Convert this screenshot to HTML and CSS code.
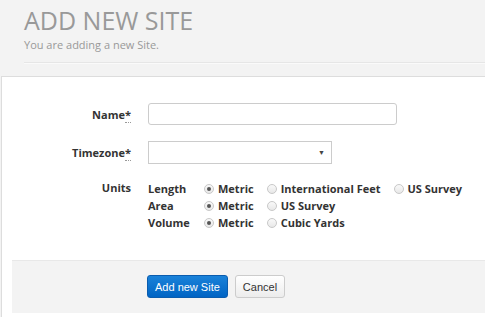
FILE: index.html
```html
<!DOCTYPE html>
<html lang="en">
<head>
  <meta charset="UTF-8">
  <title>Add New Site</title>
  <link rel="stylesheet" href="styles.css">
</head>
<body>
  <div class="page-head">
    <h1>ADD NEW SITE</h1>
    <p>You are adding a new Site.</p>
  </div>
  <div class="panel">
    <form class="site-form">
      <div class="row">
        <label class="lbl" for="name">Name<abbr>*</abbr></label>
        <input type="text" id="name" class="text-input">
      </div>
      <div class="row">
        <label class="lbl" for="tz">Timezone<abbr>*</abbr></label>
        <div class="select"><span class="arrow">&#9660;</span></div>
      </div>
      <div class="row units-row">
        <span class="lbl">Units</span>
        <div class="units">
          <div class="unit-line">
            <span class="unit-name">Length</span>
            <label class="opt"><input type="radio" name="len" checked>Metric</label>
            <label class="opt"><input type="radio" name="len">International Feet</label>
            <label class="opt"><input type="radio" name="len">US Survey</label>
          </div>
          <div class="unit-line">
            <span class="unit-name">Area</span>
            <label class="opt"><input type="radio" name="area" checked>Metric</label>
            <label class="opt"><input type="radio" name="area">US Survey</label>
          </div>
          <div class="unit-line">
            <span class="unit-name">Volume</span>
            <label class="opt"><input type="radio" name="vol" checked>Metric</label>
            <label class="opt"><input type="radio" name="vol">Cubic Yards</label>
          </div>
        </div>
      </div>
      <div class="actions">
        <button type="button" class="btn btn-primary">Add new Site</button>
        <button type="button" class="btn">Cancel</button>
      </div>
    </form>
  </div>
</body>
</html>
```

FILE: styles.css
```css
body { margin: 0; background: #f3f3f3; font-family: "Open Sans", sans-serif; color: #333; overflow: hidden; }
.page-head { margin-left: 24px; padding-top: 6px; height: 56px; border-bottom: 1px solid #e6e6e6; box-shadow: 0 1px 0 #fafafa; }
.page-head h1 { margin: 0; font-size: 25px; font-weight: 400; color: #999; line-height: 28px; }
.page-head p { margin: 4px 0 0; font-size: 11px; color: #999; line-height: 14px; }
.panel { margin: 13px 0 0 1px; background: #fff; border: 1px solid #ddd; border-right: none; border-bottom: none; height: 240px; }
.site-form { padding-top: 26px; }
.row { display: flex; align-items: center; margin-bottom: 16px; }
.lbl { width: 129px; flex-shrink: 0; text-align: right; font-size: 11px; font-weight: 700; color: #333; margin-right: 17px; }
.lbl abbr { text-decoration: none; border-bottom: 1px dotted #999; }
.text-input { width: 249px; height: 22px; box-sizing: border-box; border: 1px solid #ccc; border-radius: 3px; padding: 0 6px; margin: 0; }
.select { width: 184px; height: 23px; box-sizing: border-box; border: 1px solid #ccc; display: flex; align-items: center; justify-content: flex-end; padding-right: 6px; }
.arrow { font-size: 7px; color: #444; }
.units-row { align-items: flex-start; margin-top: 16px; }
.unit-line { display: flex; align-items: center; height: 17px; font-size: 11px; font-weight: 700; color: #333; white-space: nowrap; }
.unit-name { width: 52px; flex-shrink: 0; }
.opt { display: flex; align-items: center; margin-right: 9px; flex-shrink: 0; }
.opt input { appearance: none; width: 10px; height: 10px; margin: 0 4px 0 4px; border: 1px solid #c8c8c8; border-radius: 50%; background: linear-gradient(#f9f9f9, #e8e8e8); position: relative; flex-shrink: 0; }
.opt input:checked::after { content: ""; position: absolute; left: 2px; top: 2px; width: 4px; height: 4px; border-radius: 50%; background: #555; }
.actions { margin: 29px 0 0 10px; background: #f3f3f3; border-top: 1px solid #e8e8e8; height: 53px; padding: 14px 0 0 135px; box-sizing: border-box; display: flex; gap: 7px; align-items: flex-start; }
.btn { font-family: "Liberation Sans", Arial, sans-serif; font-size: 11px; height: 23px; padding: 0 7px; border-radius: 3px; border: 1px solid #ccc; background: linear-gradient(#fff, #ececec); color: #333; }
.btn-primary { background: linear-gradient(#1a82d9, #0064c4); border-color: #0a5cae; color: #fff; }
```
